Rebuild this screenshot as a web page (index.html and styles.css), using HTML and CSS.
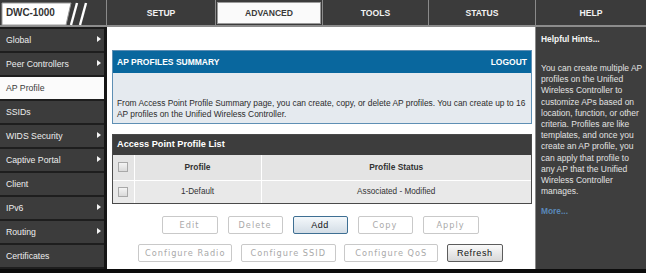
FILE: index.html
```html
<!DOCTYPE html>
<html>
<head>
<meta charset="utf-8">
<link rel="stylesheet" href="styles.css">
</head>
<body>
<div class="app">
  <header class="topbar">
    <div class="logo">
      <svg class="logo-art" width="106" height="27" viewBox="0 0 106 27">
        <polygon points="2,3 71,3 66,25 2,25" fill="#fff" stroke="#9a9a9a" stroke-width="1"/>
        <line x1="77" y1="3" x2="71" y2="25" stroke="#fff" stroke-width="2.4"/>
        <line x1="86" y1="3" x2="80" y2="25" stroke="#fff" stroke-width="2.4"/>
      </svg>
      <span class="logo-text">DWC-1000</span>
    </div>
    <nav class="tabs">
      <div class="tab t-setup">SETUP</div>
      <div class="tab t-adv active"><span>ADVANCED</span></div>
      <div class="tab t-tools">TOOLS</div>
      <div class="tab t-status">STATUS</div>
      <div class="tab t-help">HELP</div>
    </nav>
  </header>
  <div class="content">
    <aside class="sidebar">
      <div class="item">Global<i class="arrow"></i></div>
      <div class="item">Peer Controllers<i class="arrow"></i></div>
      <div class="item selected">AP Profile</div>
      <div class="item">SSIDs</div>
      <div class="item">WIDS Security<i class="arrow"></i></div>
      <div class="item">Captive Portal<i class="arrow"></i></div>
      <div class="item">Client</div>
      <div class="item">IPv6<i class="arrow"></i></div>
      <div class="item">Routing<i class="arrow"></i></div>
      <div class="item">Certificates</div>
    </aside>
    <main class="main">
      <section class="summary">
        <div class="summary-head"><span>AP PROFILES SUMMARY</span><span>LOGOUT</span></div>
        <div class="summary-body">From Access Point Profile Summary page, you can create, copy, or delete AP profiles. You can create up to 16<br>AP profiles on the Unified Wireless Controller.</div>
      </section>
      <section class="list">
        <div class="list-head">Access Point Profile List</div>
        <table class="grid">
          <tr class="hrow"><td class="cb"><span class="box"></span></td><td class="c-prof">Profile</td><td class="c-stat">Profile Status</td></tr>
          <tr class="drow"><td class="cb"><span class="box"></span></td><td class="c-prof">1-Default</td><td class="c-stat">Associated - Modified</td></tr>
        </table>
      </section>
      <div class="buttons">
        <div class="btn-row r1">
          <button class="btn dis w56">Edit</button>
          <button class="btn dis w55">Delete</button>
          <button class="btn add w55">Add</button>
          <button class="btn dis w55">Copy</button>
          <button class="btn dis w56">Apply</button>
        </div>
        <div class="btn-row r2">
          <button class="btn dis w94">Configure Radio</button>
          <button class="btn dis w95">Configure SSID</button>
          <button class="btn dis w94">Configure QoS</button>
          <button class="btn refresh w56">Refresh</button>
        </div>
      </div>
    </main>
    <aside class="help">
      <div class="help-title">Helpful Hints...</div>
      <p class="help-text">You can create multiple AP<br>profiles on the Unified<br>Wireless Controller to<br>customize APs based on<br>location, function, or other<br>criteria. Profiles are like<br>templates, and once you<br>create an AP profile, you<br>can apply that profile to<br>any AP that the Unified<br>Wireless Controller<br>manages.</p>
      <div class="more">More...</div>
    </aside>
  </div>
</div>
</body>
</html>
```
FILE: styles.css
```css
* { box-sizing: border-box; }
html, body { margin: 0; padding: 0; }
body {
  width: 646px;
  height: 273px;
  background: #0c0c0c;
  font-family: "Liberation Sans", Arial, sans-serif;
  overflow: hidden;
}
.app { width: 646px; height: 269px; display: flex; flex-direction: column; }

/* top bar */
.topbar {
  height: 27px;
  display: flex;
  background: #3b3b3b;
  border-bottom: 2px solid #8c8c8c;
}
.logo { position: relative; width: 106px; height: 25px; }
.logo-art { position: absolute; left: 0; top: 0; }
.logo-text {
  position: absolute; left: 6px; top: 7px;
  font-size: 10px; font-weight: bold; color: #333;
  letter-spacing: -0.1px;
}
.tabs { display: flex; flex: 1; }
.tab {
  display: flex; align-items: center; justify-content: center;
  height: 25px;
  border-left: 1px solid #8a8a8a;
  color: #f2f2f2; font-weight: bold; font-size: 8.6px;
}
.t-setup { width: 109px; }
.t-adv { width: 107px; padding: 2px 1px 1px; }
.t-tools { width: 106px; }
.t-status { width: 107px; }
.t-help { width: 111px; }
.tab.active span {
  display: flex; align-items: center; justify-content: center;
  width: 100%; height: 100%;
  background: #fafafa; border: 1px solid #9a9a9a;
  color: #3a3a3a;
}

/* content */
.content { display: flex; height: 242px; }
.sidebar {
  width: 107px;
  background: #1c1c1c;
  border-right: 3px solid #161616;
  padding-top: 2px;
}
.item {
  position: relative;
  height: 24px;
  border-bottom: 2px solid #1e1e1e;
  background: #3c3c3c;
  color: #ededed;
  font-size: 8.7px;
  padding: 6px 0 0 6px;
}
.item.selected { background: #fbfbfb; color: #3a3a3a; }
.arrow {
  position: absolute; right: 3px; top: 7px;
  width: 0; height: 0;
  border-top: 3.5px solid transparent;
  border-bottom: 3.5px solid transparent;
  border-left: 4px solid #f4f4f4;
}

.main {
  width: 428px;
  background: #fff;
  padding: 23px 3px 0 5px;
}
.summary { border: 1px solid #5e8fb4; }
.summary-head {
  height: 22px;
  background: #09679e;
  display: flex; justify-content: space-between; align-items: center;
  padding: 0 4px 0 4px;
  color: #fff; font-weight: bold; font-size: 8.5px;
}
.summary-body {
  background: #e5eaef;
  height: 50px;
  padding: 25px 0 0 4px;
  font-size: 8.4px;
  line-height: 11px;
  color: #2c2c2c;
  white-space: nowrap;
}
.list { margin-top: 10px; border: 1px solid #4a4a4a; }
.list-head {
  height: 20px;
  background: #3d3d3d;
  color: #fff; font-weight: bold; font-size: 9.2px;
  padding: 4px 0 0 4px;
}
.grid { width: 100%; border-collapse: collapse; background: #fff; }
.grid td { border: 1px solid #fff; padding: 0; font-size: 8.2px; color: #333; text-align: center; }
.hrow td { height: 25px; background: #e4e4e4; font-weight: bold; font-size: 8.4px; }
.drow td { height: 23px; background: #e9e9e9; }
.grid td.cb { width: 21px; border-left: 0; }
.grid td.c-prof { width: 127px; }
.grid td.c-stat { border-right: 0; }
.grid tr:first-child td { border-top: 0; }
.grid tr:last-child td { border-bottom: 0; }
.box {
  display: block; width: 10px; height: 10px; margin: 0 auto;
  border: 1px solid #a8a8a8;
  background: linear-gradient(#f4f4f4, #dadada);
}

.buttons { margin-top: 12px; display: flex; flex-direction: column; gap: 10px; }
.btn-row { display: flex; justify-content: center; }
.r1 { gap: 10px; margin-left: -4px; }
.r2 { gap: 8.5px; margin-left: -3px; }
.btn {
  height: 18px; padding: 0;
  font-family: "DejaVu Sans", sans-serif;
  font-size: 8.2px; letter-spacing: 1px;
  border-radius: 2px;
  background: #fff;
}
.btn.dis { border: 1px solid #c9c9c9; color: #a9a9a9; }
.btn.add {
  border: 1px solid #3e6f93; color: #111;
  background: linear-gradient(#f4f8fb, #d3dde6);
  font-family: "Liberation Sans", sans-serif; font-size: 9px; letter-spacing: 0.5px;
}
.btn.refresh {
  border: 1px solid #5c5c5c; color: #111;
  background: linear-gradient(#fafafa, #d8d8d8);
  font-family: "Liberation Sans", sans-serif; font-size: 9px; letter-spacing: 0.6px;
}
.w55 { width: 55px; }
.w56 { width: 56px; }
.w94 { width: 94px; }
.w95 { width: 95px; }

.help {
  width: 111px;
  background: #3e3e3e;
  border-left: 1px solid #8a8a8a;
  padding: 7px 0 0 5px;
}
.help-title { color: #f4f4f4; font-weight: bold; font-size: 8.4px; }
.help-text {
  margin: 19px 0 0;
  color: #e2e2e2; font-size: 8.5px; line-height: 11.2px;
}
.more { margin-top: 9px; color: #5a88b8; font-weight: bold; font-size: 8.4px; }
```
